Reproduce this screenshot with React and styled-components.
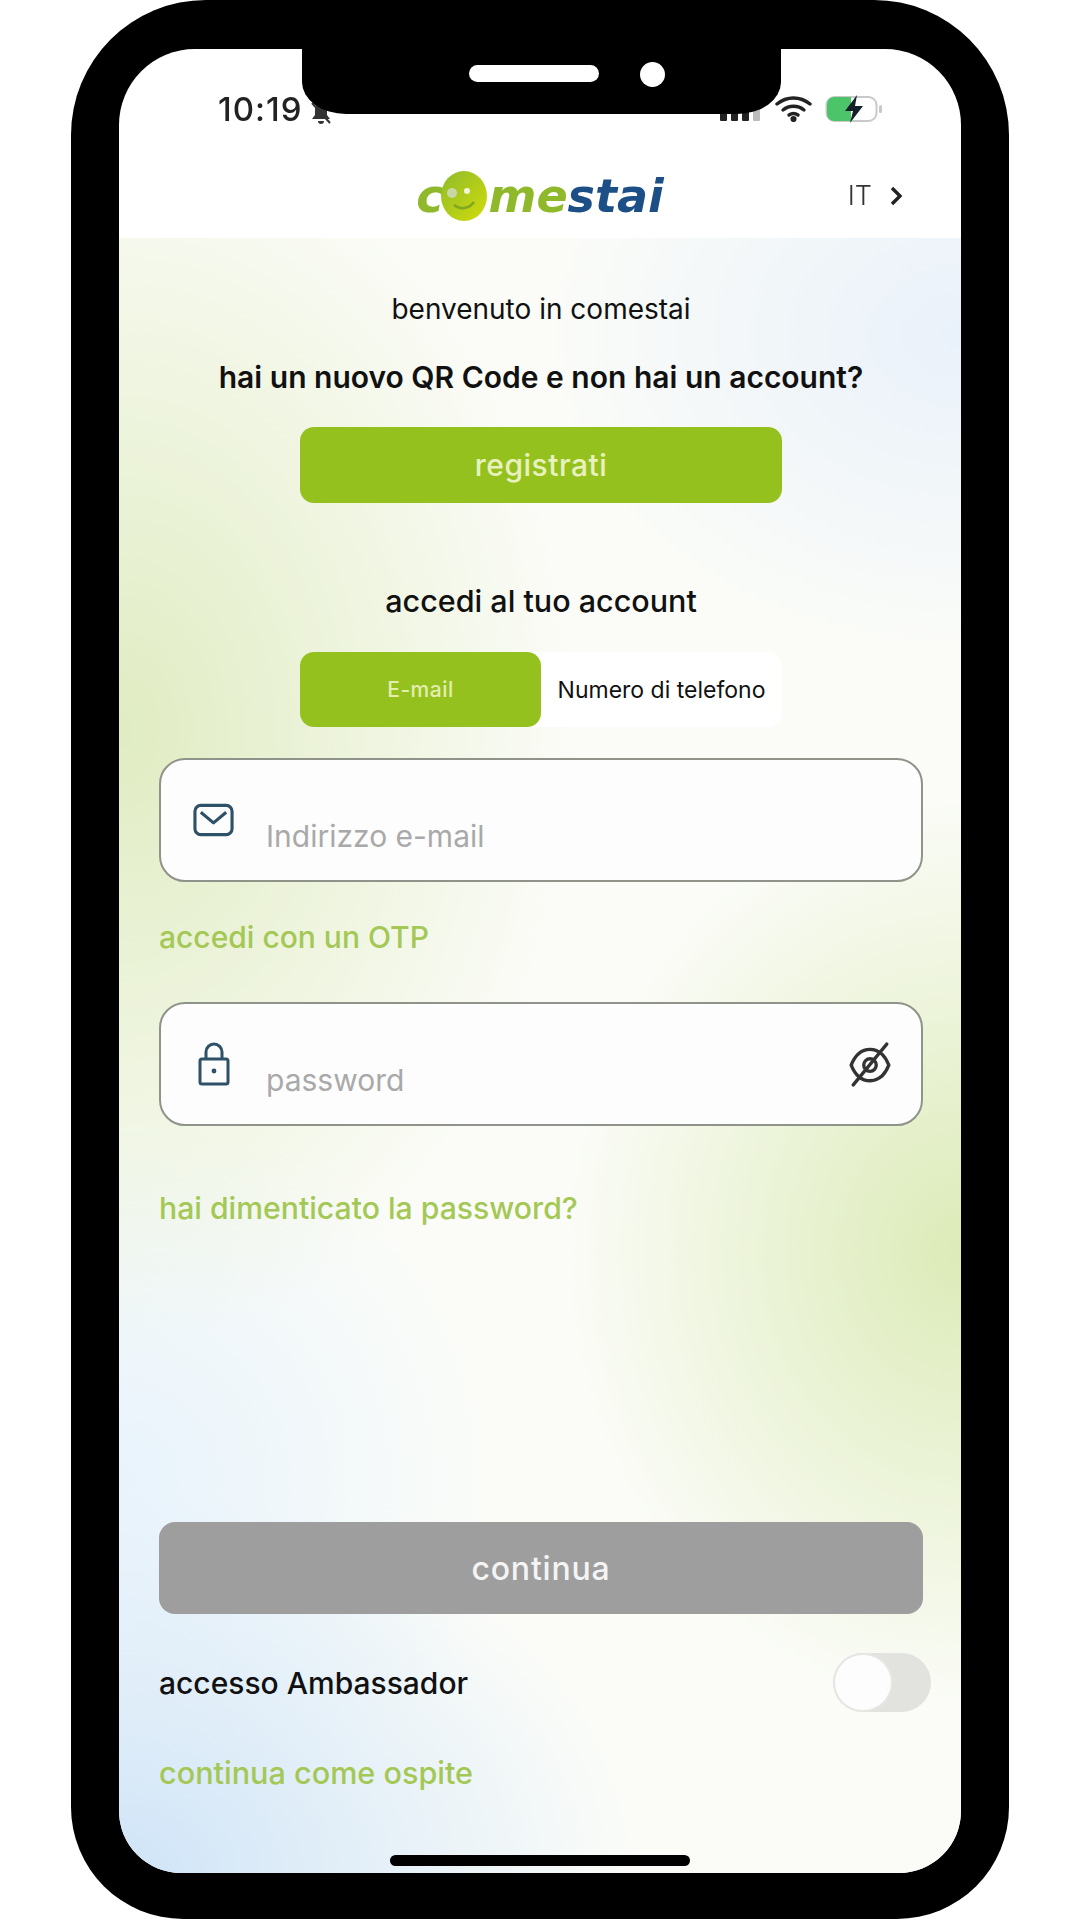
import React from 'react';
import styled, { createGlobalStyle } from 'styled-components';

const GlobalStyle = createGlobalStyle`
    html, body {
        margin: 0;
        padding: 0;
        background: #fff;
    }
    * {
        box-sizing: border-box;
    }
`;

const Page = styled.div`
    width: 1080px;
    height: 1920px;
    display: flex;
    justify-content: center;
    background: #fff;
    font-family: Inter, "Liberation Sans", sans-serif;
    overflow: hidden;
`;

const Phone = styled.div`
    position: relative;
    width: 938px;
    height: 1919px;
    padding: 49px 48px 46px;
    background: #000;
    border-radius: 135px 135px 112px 112px;
`;

const Notch = styled.div`
    position: absolute;
    top: 0;
    left: 231px;
    width: 479px;
    height: 114px;
    padding: 65px 0 0 167px;
    display: flex;
    align-items: flex-start;
    gap: 41px;
    background: #000;
    border-radius: 0 0 44px 44px / 0 0 32px 32px;
`;

const Speaker = styled.div`
    width: 130px;
    height: 17px;
    background: #fff;
    border-radius: 9px;
`;

const Camera = styled.div`
    width: 25px;
    height: 25px;
    margin-top: -3px;
    background: #fff;
    border-radius: 50%;
`;

const Screen = styled.div`
    height: 100%;
    display: flex;
    flex-direction: column;
    background: #fff;
    border-radius: 76px 76px 62px 62px;
    overflow: hidden;
    filter: blur(0.55px);
`;

const StatusBar = styled.div`
    height: 90px;
    padding: 46px 78px 0 99px;
    display: flex;
    justify-content: space-between;
    align-items: flex-start;
    color: #222;
`;

const Time = styled.div`
    display: flex;
    align-items: center;
    gap: 6px;
    height: 28px;
    font-size: 33px;
    font-weight: 500;
    letter-spacing: 1px;
`;

const MuteBell = styled.svg`
    margin-top: 8px;
`;

const StatusIcons = styled.div`
    display: flex;
    align-items: center;
    gap: 13px;
    height: 28px;
`;

const Nav = styled.div`
    height: 99px;
    padding: 14px 57px 0 57px;
    display: grid;
    grid-template-columns: 1fr auto 1fr;
    align-items: center;
`;

const Logo = styled.div`
    grid-column: 2;
    display: flex;
    align-items: center;
    font-family: "DejaVu Sans", sans-serif;
    font-size: 46px;
    font-weight: 700;
    font-style: italic;
    color: #8fb82a;
`;

const LogoDisc = styled.svg`
    width: 48px;
    height: 50px;
    margin: 0 0 0 -3px;
`;

const LogoBlue = styled.span`
    color: #1d4f87;
`;

const Lang = styled.div`
    justify-self: end;
    display: flex;
    align-items: center;
    gap: 18px;
    font-size: 27px;
    font-weight: 300;
    color: #333;
`;

const Body = styled.div`
    flex: 1;
    padding: 0 38px 7px 40px;
    display: flex;
    flex-direction: column;
    background:
        radial-gradient(ellipse 460px 620px at 0% 30%, #e0ecc2 0%, rgba(224, 236, 194, 0) 100%),
        radial-gradient(ellipse 420px 320px at 100% 6%, #e9f1fa 0%, rgba(233, 241, 250, 0) 100%),
        radial-gradient(ellipse 400px 460px at 100% 62%, #dcebb8 0%, rgba(220, 235, 184, 0) 100%),
        radial-gradient(ellipse 520px 380px at 0% 100%, #cfe4f8 0%, rgba(207, 228, 248, 0) 100%),
        radial-gradient(ellipse 380px 380px at 0% 76%, #e8f3fc 0%, rgba(232, 243, 252, 0) 100%),
        linear-gradient(#fbfcf8, #fbfcf8);
`;

const Title = styled.div`
    margin-top: ${(props) => props.top}px;
    line-height: 36px;
    text-align: center;
    color: #111;
    font-size: ${(props) => props.size}px;
    font-weight: ${(props) => props.weight};
    white-space: nowrap;
`;

const GreenButton = styled.div`
    align-self: center;
    width: 482px;
    height: 76px;
    margin-top: 32px;
    display: flex;
    align-items: center;
    justify-content: center;
    background: #95c11f;
    border-radius: 14px;
    color: #e9f1bf;
    font-size: 30px;
    font-weight: 500;
    letter-spacing: 0.5px;
`;

const Tabs = styled.div`
    align-self: center;
    width: 482px;
    height: 75px;
    margin-top: 33px;
    display: flex;
    background: #fff;
    border-radius: 14px;
`;

const Tab = styled.div`
    flex: 1;
    display: flex;
    align-items: center;
    justify-content: center;
    border-radius: 14px;
    white-space: nowrap;
    background: ${(props) => (props.active ? '#95c11f' : 'transparent')};
    color: ${(props) => (props.active ? '#e4eeb0' : '#111')};
    font-size: ${(props) => (props.active ? 21 : 23)}px;
    font-weight: ${(props) => (props.active ? 500 : 400)};
    letter-spacing: ${(props) => (props.active ? '0.5px' : '0')};
`;

const InputBox = styled.div`
    height: 124px;
    margin-top: ${(props) => props.top}px;
    padding: 0 28px 0 32px;
    display: flex;
    align-items: center;
    background: #fdfdfd;
    border: 2px solid #8f9389;
    border-radius: 26px;
`;

const InputIcon = styled.svg`
    flex: none;
    color: #2f5168;
`;

const Placeholder = styled.div`
    flex: 1;
    margin: 32px 0 0 ${(props) => props.gap}px;
    font-size: 30px;
    color: #a9a9a9;
`;

const EyeIcon = styled.svg`
    flex: none;
    color: #333;
`;

const LinkText = styled.div`
    margin-top: ${(props) => props.top}px;
    line-height: 36px;
    color: #a4c855;
    font-size: ${(props) => props.size}px;
    font-weight: 500;
`;

const Footer = styled.div`
    margin-top: auto;
    display: flex;
    flex-direction: column;
`;

const ContinueButton = styled.div`
    height: 92px;
    display: flex;
    align-items: center;
    justify-content: center;
    background: #9e9e9e;
    border-radius: 16px;
    color: #f4f4f4;
    font-size: 32px;
    font-weight: 500;
    letter-spacing: 0.8px;
`;

const AmbassadorRow = styled.div`
    margin: 39px -8px 0 0;
    height: 59px;
    display: flex;
    align-items: center;
    justify-content: space-between;
    color: #111;
    font-size: 30px;
    font-weight: 500;
`;

const Toggle = styled.div`
    width: 98px;
    height: 59px;
    background: #e2e2df;
    border-radius: 30px;
`;

const ToggleKnob = styled.div`
    width: 60px;
    height: 59px;
    background: #fdfdfd;
    border: 2px solid #e6e6e3;
    border-radius: 50%;
`;

const HomeBar = styled.div`
    align-self: center;
    width: 300px;
    height: 11px;
    margin: 64px 0 0 -2px;
    background: #000;
    border-radius: 6px;
`;

const App = () => (
    <Page>
        <GlobalStyle />
        <Phone>
            <Screen>
                <StatusBar>
                    <Time>
                        10:19
                        <MuteBell width="24" height="26" viewBox="0 0 24 26" fill="#333">
                            <path d="M12 3c-4 0-6 3-6 7v5l-3 4h18l-3-4v-5c0-4-2-7-6-7zM9 21a3 3 0 0 0 6 0z" />
                            <path d="M3 3l18 20" stroke="#333" strokeWidth="2" />
                        </MuteBell>
                    </Time>
                    <StatusIcons>
                        <svg width="42" height="28" viewBox="0 0 42 28" fill="#222">
                            <rect x="0" y="18" width="7" height="8" rx="1" />
                            <rect x="11" y="14" width="7" height="12" rx="1" />
                            <rect x="22" y="9" width="7" height="17" rx="1" />
                            <rect x="33" y="4" width="7" height="22" rx="1" fill="#bbb" />
                        </svg>
                        <svg width="37" height="26" viewBox="0 0 37 26" fill="none" stroke="#222" strokeWidth="3.4" strokeLinecap="round">
                            <path d="M2 8c10-8 23-8 33 0" />
                            <path d="M8 14c6-5 15-5 21 0" />
                            <path d="M14 19c3-2 6-2 9 0" />
                            <circle cx="18.5" cy="23" r="1.4" fill="#222" />
                        </svg>
                        <svg width="58" height="30" viewBox="0 0 58 30">
                            <rect x="1.5" y="3" width="50" height="24" rx="8" fill="#fff" stroke="#c9c9c9" strokeWidth="2" />
                            <path d="M9 3h17v24H9a7 7 0 0 1-7-7v-10a7 7 0 0 1 7-7z" fill="#4cc46a" />
                            <rect x="54" y="11" width="3" height="8" rx="1.5" fill="#c9c9c9" />
                            <path d="M32 1L20 17h8l-3 12 13-17h-8z" fill="#15202b" />
                        </svg>
                    </StatusIcons>
                </StatusBar>
                <Nav>
                    <Logo>
                        c
                        <LogoDisc viewBox="0 0 48 50">
                            <defs>
                                <linearGradient id="disc" x1="0" y1="0" x2="1" y2="1">
                                    <stop offset="0" stopColor="#8dbb2c" />
                                    <stop offset="1" stopColor="#d2dc0a" />
                                </linearGradient>
                            </defs>
                            <ellipse cx="24" cy="25" rx="23" ry="25" fill="url(#disc)" />
                            <circle cx="12" cy="22" r="5" fill="#c9d6a6" />
                            <circle cx="27" cy="20" r="3" fill="#f4f6d8" />
                            <path d="M14 34c6 5 15 4 20-3" fill="none" stroke="#7fa81f" strokeWidth="2.5" />
                        </LogoDisc>
                        me<LogoBlue>stai</LogoBlue>
                    </Logo>
                    <Lang>
                        IT
                        <svg width="14" height="20" viewBox="0 0 14 20" fill="none" stroke="#222" strokeWidth="3.4">
                            <path d="M2 2l8 8-8 8" />
                        </svg>
                    </Lang>
                </Nav>
                <Body>
                    <Title top={53} size={28} weight={400}>benvenuto in comestai</Title>
                    <Title top={32} size={30} weight={600}>hai un nuovo QR Code e non hai un account?</Title>
                    <GreenButton>registrati</GreenButton>
                    <Title top={80} size={30.5} weight={500}>accedi al tuo account</Title>
                    <Tabs>
                        <Tab active>E-mail</Tab>
                        <Tab>Numero di telefono</Tab>
                    </Tabs>
                    <InputBox top={31}>
                        <InputIcon width="41" height="34" viewBox="0 0 42 34" fill="none" stroke="currentColor" strokeWidth="3.2" strokeLinejoin="round">
                            <rect x="2" y="2" width="38" height="30" rx="6" />
                            <path d="M8 9l13 11 13-11" />
                        </InputIcon>
                        <Placeholder gap={32}>Indirizzo e-mail</Placeholder>
                    </InputBox>
                    <LinkText top={37} size={30}>accedi con un OTP</LinkText>
                    <InputBox top={47}>
                        <InputIcon width="42" height="44" viewBox="0 0 42 44" fill="none" stroke="currentColor" strokeWidth="3">
                            <rect x="7" y="17" width="28" height="25" rx="2" />
                            <path d="M13 17v-7a8 8 0 0 1 16 0v7" />
                            <circle cx="21" cy="29" r="2.4" fill="currentColor" stroke="none" />
                        </InputIcon>
                        <Placeholder gap={31}>password</Placeholder>
                        <EyeIcon width="46" height="46" viewBox="0 0 44 44" fill="none" stroke="currentColor" strokeWidth="3.2" strokeLinecap="round">
                            <path d="M4 23c4-10 10-15 18-15s14 5 18 15c-4 10-10 15-18 15S8 33 4 23z" />
                            <circle cx="22" cy="23" r="6" />
                            <path d="M38 3L6 42" />
                        </EyeIcon>
                    </InputBox>
                    <LinkText top={64} size={30.2}>hai dimenticato la password?</LinkText>
                    <Footer>
                        <ContinueButton>continua</ContinueButton>
                        <AmbassadorRow>
                            accesso Ambassador
                            <Toggle>
                                <ToggleKnob />
                            </Toggle>
                        </AmbassadorRow>
                        <LinkText top={43} size={30.6}>continua come ospite</LinkText>
                        <HomeBar />
                    </Footer>
                </Body>
            </Screen>
            <Notch>
                <Speaker />
                <Camera />
            </Notch>
        </Phone>
    </Page>
);

export default App;
